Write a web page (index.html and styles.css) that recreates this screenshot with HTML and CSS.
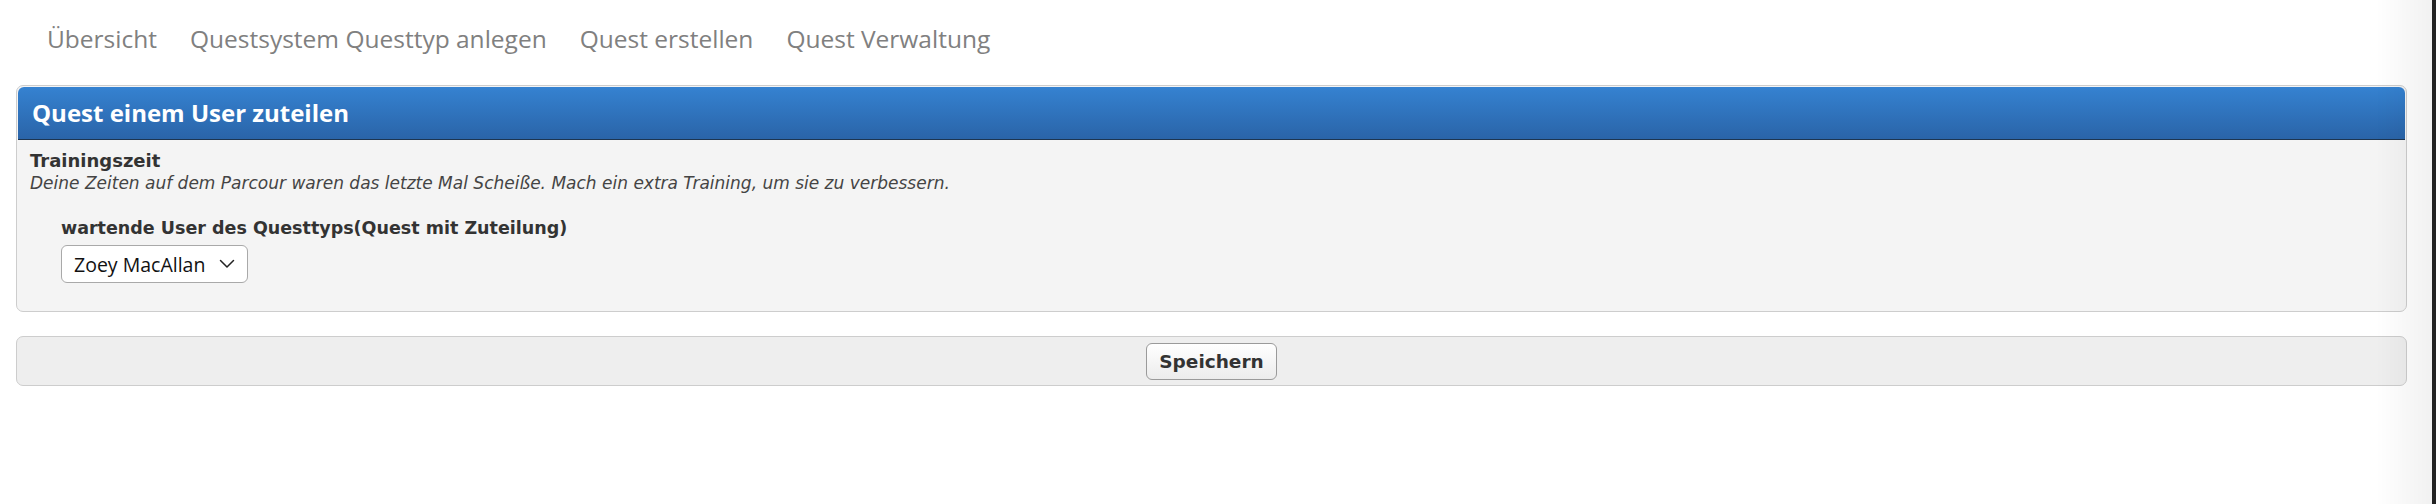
FILE: index.html
```html
<!DOCTYPE html>
<html lang="de">
<head>
<meta charset="utf-8">
<title>Quest einem User zuteilen</title>
<link rel="stylesheet" href="styles.css">
</head>
<body>
<div class="page">
  <nav class="topnav">
    <a class="nav-item" href="#">Übersicht</a>
    <a class="nav-item" href="#">Questsystem Questtyp anlegen</a>
    <a class="nav-item" href="#">Quest erstellen</a>
    <a class="nav-item" href="#">Quest Verwaltung</a>
  </nav>
  <section class="panel">
    <header class="panel-head">Quest einem User zuteilen</header>
    <div class="panel-body">
      <div class="quest-title">Trainingszeit</div>
      <div class="quest-desc">Deine Zeiten auf dem Parcour waren das letzte Mal Scheiße. Mach ein extra Training, um sie zu verbessern.</div>
      <div class="field">
        <label class="field-label">wartende User des Questtyps(Quest mit Zuteilung)</label>
        <div class="select">
          <span class="select-value">Zoey MacAllan</span>
          <svg class="chev" width="16" height="10" viewBox="0 0 16 10"><path d="M1.5 1.5 L8 8 L14.5 1.5" fill="none" stroke="#222" stroke-width="1.5" stroke-linecap="round" stroke-linejoin="round"/></svg>
        </div>
      </div>
    </div>
  </section>
  <div class="actions">
    <button class="btn" type="button">Speichern</button>
  </div>
</div>
<div class="edge-shade"></div>
<div class="edge-dark"></div>
</body>
</html>
```
FILE: styles.css
```css
html, body {
  margin: 0;
  padding: 0;
  background: #fff;
}
body {
  font-family: "DejaVu Sans", "Open Sans", sans-serif;
  color: #333;
}
.page {
  padding: 0 29px 0 16px;
}
.topnav {
  display: flex;
  gap: 33px;
  padding: 20px 0 0 31px;
  height: 85px;
  box-sizing: border-box;
}
.nav-item {
  font-family: "Open Sans", sans-serif;
  font-size: 24.5px;
  line-height: 38px;
  color: #808080;
  text-decoration: none;
}
.panel {
  border: 1px solid #cdcdcd;
  border-radius: 7px;
  background: #f4f4f4;
  padding: 1px;
  height: 227px;
  box-sizing: border-box;
}
.panel-head {
  height: 52px;
  background: linear-gradient(#3582d1, #2a64a8);
  border-bottom: 1px solid #1d3550;
  border-radius: 6px 6px 0 0;
  color: #fff;
  font-family: "Open Sans", sans-serif;
  font-weight: 700;
  font-size: 24px;
  line-height: 52px;
  padding-left: 14px;
}
.panel-body {
  padding: 10px 12px 0;
}
.quest-title {
  font-weight: 700;
  font-size: 18px;
  line-height: 22px;
  color: #333;
}
.quest-desc {
  font-style: italic;
  font-size: 17px;
  line-height: 22px;
  color: #444;
}
.field {
  padding: 22px 0 0 31px;
}
.field-label {
  display: block;
  font-weight: 700;
  font-size: 17.5px;
  line-height: 24px;
  color: #333;
}
.select {
  margin-top: 5px;
  display: inline-flex;
  align-items: center;
  justify-content: space-between;
  width: 187px;
  height: 38px;
  box-sizing: border-box;
  background: #fff;
  border: 1px solid #a9a9a9;
  border-radius: 6px;
  padding: 0 12px 0 12px;
}
.select-value {
  font-family: "Open Sans", sans-serif;
  font-size: 19.5px;
  color: #111;
}
.actions {
  margin-top: 24px;
  height: 50px;
  box-sizing: border-box;
  border: 1px solid #cdcdcd;
  border-radius: 7px;
  background: #eeeeee;
  display: flex;
  justify-content: center;
  align-items: center;
}
.btn {
  font-family: "DejaVu Sans", sans-serif;
  font-weight: 700;
  font-size: 18.5px;
  color: #333;
  height: 37px;
  padding: 0 12px;
  border: 1px solid #9a9a9a;
  border-radius: 6px;
  background: linear-gradient(#ffffff, #ececec);
}
.edge-shade {
  position: fixed;
  top: 0;
  right: 4px;
  width: 56px;
  height: 100%;
  background: linear-gradient(to right, rgba(0,0,0,0), rgba(0,0,0,0.055));
  pointer-events: none;
}
.edge-dark {
  position: fixed;
  top: 0;
  right: 0;
  width: 4px;
  height: 100%;
  background: #222;
}
```
